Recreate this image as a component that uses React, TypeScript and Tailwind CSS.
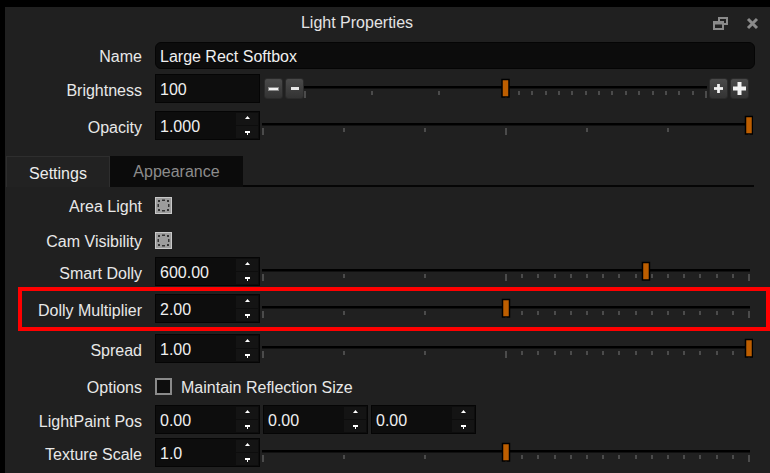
import React from "react"

// ─── Helpers ──────────────────────────────────────────────────────────────────

const FONT = { fontFamily: '"Liberation Sans", Arial, sans-serif' }

type TickMode = "split" | "even"

function tickList(mode: TickMode): number[] {
  if (mode === "even") return [0, 1, 2, 3, 4, 5, 6].map((i) => i / 6)
  const left = [0, 1, 2, 3].map((i) => i / 6)
  const right = Array.from({ length: 15 }, (_, j) => 0.5 + ((j + 1) * 0.5) / 15)
  return [...left, ...right]
}

// ─── Slider (drawn) ───────────────────────────────────────────────────────────

function Slider({
  width,
  start,
  end,
  value,
  mode = "split",
}: {
  width: number
  start: number
  end: number
  value: number
  mode?: TickMode
}) {
  const len = end - start
  const hx = start + value * len
  return (
    <svg width={width} height={29} className="block shrink-0">
      <rect x={start - 1} y={12} width={len + 2} height={2.5} fill="#000" />
      {tickList(mode).map((t, i) => {
        const major = t === 0 || Math.abs(t - 0.5) < 0.001 || Math.abs(t - 1) < 0.001
        const x = Math.round(start + t * len)
        return (
          <rect
            key={i}
            x={x - 0.75}
            y={17}
            width={1.5}
            height={major ? 7 : 4}
            fill="#5a5a5a"
          />
        )
      })}
      <rect x={hx - 3.5} y={5.5} width={7} height={17.5} fill="#bd5e00" stroke="#000" strokeWidth={1.5} />
    </svg>
  )
}

// ─── Inputs ───────────────────────────────────────────────────────────────────

function SpinInput({ value }: { value: string }) {
  return (
    <div className="flex h-[29px] w-[105px] shrink-0 items-stretch border border-[#050505] bg-[#0d0d0d]">
      <div className="flex flex-1 items-center pl-[4px] pt-[3px] text-[16px] text-[#f0f0f0]">{value}</div>
      <div className="my-[1px] mr-[1px] flex w-[22px] flex-col gap-[1px]">
        <div className="flex flex-1 items-start justify-center bg-[#141414] pt-[3px]">
          <svg width="5" height="3">
            <polygon points="2.5,0 5,3 0,3" fill="#fff" />
          </svg>
        </div>
        <div className="flex flex-1 items-end justify-center bg-[#141414] pb-[3px]">
          <svg width="5" height="4">
            <polygon points="0,0 5,0 5,2 3,2 3,4 2,4 2,2 0,2" fill="#fff" />
          </svg>
        </div>
      </div>
    </div>
  )
}

function StepButton({ kind, big }: { kind: "minus" | "plus"; big?: boolean }) {
  return (
    <div className="flex h-[21px] w-[19px] shrink-0 items-center justify-center rounded-[3px] border border-[#2a2a2a] bg-gradient-to-b from-[#4a4a4a] to-[#333]">
      {kind === "minus" ? (
        big ? (
          <div className="h-[4px] w-[11px] border border-[#888] bg-[#f0f0f0]" />
        ) : (
          <div className="h-[3px] w-[8px] bg-[#e8e8e8]" />
        )
      ) : (
        <svg width={big ? 13 : 9} height={big ? 13 : 9} viewBox="0 0 13 13">
          <rect x="4.5" y="0" width="4" height="13" fill="#f2f2f2" />
          <rect x="0" y="4.5" width="13" height="4" fill="#f2f2f2" />
        </svg>
      )}
    </div>
  )
}

function CheckBox({ checked }: { checked?: boolean }) {
  if (!checked) {
    return <div className="h-[17px] w-[17px] shrink-0 border-2 border-[#8a8a8a] bg-[#0e0e0e]" />
  }
  return (
    <svg width="17" height="17" className="block shrink-0">
      <rect x="0.5" y="0.5" width="16" height="16" fill="#9c9c9c" stroke="#c8c8c8" />
      <rect x="3" y="3" width="2" height="2" fill="#333" />
      <rect x="12" y="3" width="2" height="2" fill="#333" />
      <rect x="3" y="12" width="2" height="2" fill="#333" />
      <rect x="12" y="12" width="2" height="2" fill="#333" />
      <rect x="7" y="2.5" width="3" height="1.5" fill="#333" />
      <rect x="7" y="13" width="3" height="1.5" fill="#333" />
      <rect x="2.5" y="7" width="1.5" height="3" fill="#333" />
      <rect x="13" y="7" width="1.5" height="3" fill="#333" />
    </svg>
  )
}

// ─── Row ──────────────────────────────────────────────────────────────────────

function Label({ children, narrow }: { children: React.ReactNode; narrow?: boolean }) {
  return (
    <div
      className={`${narrow ? "w-[120px]" : "w-[137px]"} mr-[13px] shrink-0 whitespace-nowrap pt-[4px] text-right text-[16px] text-[#e8e8e8]`}
    >
      {children}
    </div>
  )
}

// ─── Main View ────────────────────────────────────────────────────────────────

export default function App() {
  return (
    <div className="h-[473px] w-[770px] overflow-hidden bg-black pl-[5px] pt-[7px]" style={FONT}>
      <div className="h-full bg-[#202020]">
        {/* Title bar */}
        <div className="flex h-[30px] items-center">
          <div className="flex-1 pt-[2px] text-center text-[16px] text-[#e4e4e4]">Light Properties</div>
          <div className="flex w-[61px] items-center pt-[2px]">
            <svg width="15" height="13" className="ml-[4px] block">
              <rect x="6" y="1" width="8" height="6" fill="none" stroke="#8a8a8a" strokeWidth="2" />
              <rect x="1" y="5" width="9" height="7" fill="#202020" stroke="#8a8a8a" strokeWidth="2" />
              <rect x="1" y="5" width="9" height="2.5" fill="#8a8a8a" />
            </svg>
            <svg width="13" height="13" className="ml-[18px] block">
              <path d="M2 2 L11 11 M11 2 L2 11" stroke="#8a8a8a" strokeWidth="3" />
            </svg>
          </div>
        </div>

        {/* Name */}
        <div className="mt-[4px] flex items-center">
          <Label>Name</Label>
          <div className="flex h-[27px] w-[600px] items-center rounded-[6px] border border-[#050505] bg-[#0c0c0c] pl-[4px] pt-[3px] text-[16px] text-[#f0f0f0]">
            Large Rect Softbox
          </div>
        </div>

        {/* Brightness */}
        <div className="mt-[5px] flex items-center">
          <Label>Brightness</Label>
          <div className="flex h-[29px] w-[105px] shrink-0 items-center border border-[#050505] bg-[#0d0d0d] pl-[4px] pt-[3px] text-[16px] text-[#f0f0f0]">
            100
          </div>
          <div className="ml-[4px]">
            <StepButton kind="minus" big />
          </div>
          <div className="ml-[2px]">
            <StepButton kind="minus" />
          </div>
          <Slider width={404} start={1} end={402} value={0.5} />
          <div className="ml-[1px]">
            <StepButton kind="plus" />
          </div>
          <div className="ml-[2px]">
            <StepButton kind="plus" big />
          </div>
        </div>

        {/* Opacity */}
        <div className="mt-[8px] flex items-center">
          <Label>Opacity</Label>
          <SpinInput value="1.000" />
          <Slider width={493} start={3} end={489} value={1} mode="even" />
        </div>

        {/* Tabs */}
        <div className="mt-[16px] flex h-[31px] items-stretch">
          <div className="ml-[1px] flex w-[104px] items-center justify-center border-l border-r border-t border-[#2e2e2e] bg-[#222] pt-[3px] text-[16px] text-[#ececec]">
            Settings
          </div>
          <div className="flex w-[133px] items-center justify-center bg-[#0b0b0b] pt-[1px] text-[16px] text-[#8c8c8c]">
            Appearance
          </div>
          <div className="flex w-[511px] flex-col justify-end">
            <div className="h-[2px] bg-[#050505]" />
          </div>
        </div>

        {/* Area Light */}
        <div className="mt-[4px] flex h-[28px] items-center">
          <Label>Area Light</Label>
          <CheckBox checked />
        </div>

        {/* Cam Visibility */}
        <div className="mt-[7px] flex h-[28px] items-center">
          <Label>Cam Visibility</Label>
          <CheckBox checked />
        </div>

        {/* Smart Dolly */}
        <div className="mt-[3px] flex items-center">
          <Label>Smart Dolly</Label>
          <SpinInput value="600.00" />
          <Slider width={493} start={3} end={489} value={0.788} />
        </div>

        {/* Dolly Multiplier (highlighted) */}
        <div className="ml-[13px] mt-[1px] h-[44px] w-[752px] border-4 border-[#ff0000] pt-[3px]">
          <div className="flex items-center">
            <Label narrow>Dolly Multiplier</Label>
            <SpinInput value="2.00" />
            <Slider width={493} start={3} end={489} value={0.5} />
          </div>
        </div>

        {/* Spread */}
        <div className="mt-[3px] flex items-center">
          <Label>Spread</Label>
          <SpinInput value="1.00" />
          <Slider width={493} start={3} end={489} value={1} />
        </div>

        {/* Options */}
        <div className="mt-[9px] flex h-[28px] items-center">
          <Label>Options</Label>
          <CheckBox />
          <span className="ml-[9px] pt-[4px] text-[16px] text-[#e8e8e8]">Maintain Reflection Size</span>
        </div>

        {/* LightPaint Pos */}
        <div className="mt-[5px] flex items-center gap-[3px]">
          <Label>LightPaint Pos</Label>
          <div className="-ml-[3px] flex gap-[3px]">
            <SpinInput value="0.00" />
            <SpinInput value="0.00" />
            <SpinInput value="0.00" />
          </div>
        </div>

        {/* Texture Scale */}
        <div className="mt-[4px] flex items-center">
          <Label>Texture Scale</Label>
          <SpinInput value="1.0" />
          <Slider width={493} start={3} end={489} value={0.5} />
        </div>
      </div>
    </div>
  )
}
